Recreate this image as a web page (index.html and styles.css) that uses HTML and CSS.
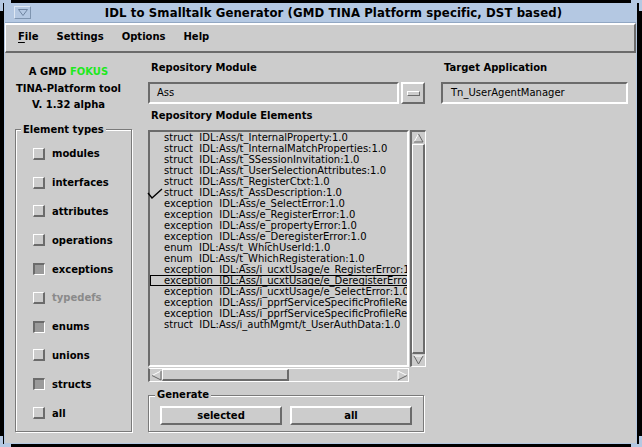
FILE: index.html
```html
<!doctype html>
<html lang="en">
<head>
  <meta charset="utf-8" />
  <title>IDL to Smalltalk Generator</title>
  <link rel="stylesheet" href="styles.css">
</head>
<body>
  <div class="screen">
    <span class="corner tl"></span>
    <span class="corner tr"></span>
    <span class="corner bl"></span>
    <span class="corner br"></span>

    <div class="window">
      <div class="titlebar">
        <span class="tb-btn">
          <svg width="10" height="7" viewBox="0 0 10 7"><path d="M0.5 0.5 H9.5 L5 6.5 Z" fill="none" stroke="#6f84a0" stroke-width="1"/></svg>
        </span>
        <span class="title">IDL to Smalltalk Generator (GMD TINA Platform specific, DST based)</span>
      </div>

      <div class="menubar">
        <span class="menu"><u>F</u>ile</span>
        <span class="menu">Settings</span>
        <span class="menu">Options</span>
        <span class="menu">Help</span>
      </div>

      <div class="content">
        <div class="side">
          <div class="about">
            <div>A GMD <span class="fokus">FOKUS</span></div>
            <div>TINA-Platform tool</div>
            <div>V. 1.32 alpha</div>
          </div>

          <fieldset class="group types">
            <legend>Element types</legend>
            <div class="type-list">
              <div class="type"><span class="cb"></span>modules</div>
              <div class="type"><span class="cb"></span>interfaces</div>
              <div class="type"><span class="cb"></span>attributes</div>
              <div class="type"><span class="cb"></span>operations</div>
              <div class="type"><span class="cb on"></span>exceptions</div>
              <div class="type off"><span class="cb"></span>typedefs</div>
              <div class="type"><span class="cb on"></span>enums</div>
              <div class="type"><span class="cb"></span>unions</div>
              <div class="type"><span class="cb on"></span>structs</div>
              <div class="type"><span class="cb"></span>all</div>
            </div>
          </fieldset>
        </div>

        <div class="main">
          <div class="top-row">
            <div class="col-module">
              <div class="label">Repository Module</div>
              <div class="field-row">
                <div class="field module">Ass</div>
                <span class="opt-btn"><span class="bar"></span></span>
              </div>
            </div>
            <div class="col-target">
              <div class="label">Target Application</div>
              <div class="field-row">
                <div class="field target">Tn_UserAgentManager</div>
              </div>
            </div>
          </div>

          <div class="label elements">Repository Module Elements</div>

          <div class="list-area">
            <div class="list">
              <svg class="check" width="16" height="11" viewBox="0 0 16 11"><path d="M1 5 L5 10 L15 1" fill="none" stroke="#000" stroke-width="1.4"/></svg>
              <div class="item">struct  IDL:Ass/t_InternalProperty:1.0</div>
              <div class="item">struct  IDL:Ass/t_InternalMatchProperties:1.0</div>
              <div class="item">struct  IDL:Ass/t_SSessionInvitation:1.0</div>
              <div class="item">struct  IDL:Ass/t_UserSelectionAttributes:1.0</div>
              <div class="item">struct  IDL:Ass/t_RegisterCtxt:1.0</div>
              <div class="item">struct  IDL:Ass/t_AssDescription:1.0</div>
              <div class="item">exception  IDL:Ass/e_SelectError:1.0</div>
              <div class="item">exception  IDL:Ass/e_RegisterError:1.0</div>
              <div class="item">exception  IDL:Ass/e_propertyError:1.0</div>
              <div class="item">exception  IDL:Ass/e_DeregisterError:1.0</div>
              <div class="item">enum  IDL:Ass/t_WhichUserId:1.0</div>
              <div class="item">enum  IDL:Ass/t_WhichRegisteration:1.0</div>
              <div class="item">exception  IDL:Ass/i_ucxtUsage/e_RegisterError:1.0</div>
              <div class="item focus">exception  IDL:Ass/i_ucxtUsage/e_DeregisterError:1.0</div>
              <div class="item">exception  IDL:Ass/i_ucxtUsage/e_SelectError:1.0</div>
              <div class="item">exception  IDL:Ass/i_pprfServiceSpecificProfileReg/e_SelectError:1.0</div>
              <div class="item">exception  IDL:Ass/i_pprfServiceSpecificProfileReg/e_RegisterError:1.0</div>
              <div class="item">struct  IDL:Ass/i_authMgmt/t_UserAuthData:1.0</div>
            </div>

            <div class="vscroll">
              <span class="arrow up">
                <svg width="11" height="10" viewBox="0 0 11 10"><path d="M1 9 L5.5 1" stroke="#fff" fill="none"/><path d="M5.5 1 L10 9 H1" stroke="#666" fill="none"/></svg>
              </span>
              <span class="thumb v"></span>
              <span class="arrow down">
                <svg width="11" height="10" viewBox="0 0 11 10"><path d="M1 1 H10" stroke="#fff" fill="none"/><path d="M1 1 L5.5 9 L10 1" stroke="#666" fill="none"/></svg>
              </span>
            </div>

            <div class="hscroll">
              <span class="arrow left">
                <svg width="11" height="11" viewBox="0 0 11 11"><path d="M10 1 L1 5.5" stroke="#fff" fill="none"/><path d="M1 5.5 L10 10 V1" stroke="#666" fill="none"/></svg>
              </span>
              <span class="thumb h"></span>
              <span class="track"></span>
              <span class="arrow right">
                <svg width="11" height="11" viewBox="0 0 11 11"><path d="M1 10 V1 L10 5.5" stroke="#fff" fill="none"/><path d="M10 5.5 L1 10" stroke="#666" fill="none"/></svg>
              </span>
            </div>
          </div>

          <fieldset class="group generate">
            <legend>Generate</legend>
            <div class="buttons">
              <button class="btn">selected</button>
              <button class="btn">all</button>
            </div>
          </fieldset>
        </div>
      </div>
    </div>
  </div>
</body>
</html>
```

FILE: styles.css
```css
:root{
  --bg:#cccccc;
  --dark:#6b6b6b;
  --light:#ffffff;
  --frame:#b4c8e2;
}
*{box-sizing:border-box}
html,body{height:100%}
body{
  margin:0;
  background:#000;
  overflow:hidden;
  font-family:"DejaVu Sans",Verdana,sans-serif;
  font-size:10px;
  color:#000;
}

.screen{
  position:relative;
  width:642px;
  height:447px;
  padding:3px 0 0 4px;
}

/* resize handles of the window frame */
.corner{position:absolute;width:11px;height:11px;border:0 solid var(--frame)}
.corner.tl{left:0;top:0;border-top-width:3px;border-left-width:3px}
.corner.tr{right:0;top:0;border-top-width:3px;border-right-width:3px}
.corner.bl{left:0;bottom:0;border-bottom-width:3px;border-left-width:3px}
.corner.br{right:0;bottom:0;border-bottom-width:3px;border-right-width:3px}

.window{
  width:633px;
  height:441px;
  border:1px solid var(--frame);
  border-top:0;
  background:var(--bg);
  display:flex;
  flex-direction:column;
}

.titlebar{
  height:20px;
  background:var(--frame);
  border-bottom:1px solid #91a7c3;
  display:flex;
  align-items:center;
  padding-left:9px;
}
.tb-btn{
  width:17px;
  height:13px;
  border:1px solid;
  border-color:#dfe8f3 #7f95b0 #7f95b0 #dfe8f3;
  display:flex;
  align-items:center;
  justify-content:center;
}
.title{
  flex:1;
  text-align:center;
  font-family:"DejaVu Sans Condensed","DejaVu Sans",sans-serif;
  font-stretch:condensed;
  font-weight:700;
  font-size:13px;
  letter-spacing:0.1px;
}

.menubar{
  height:30px;
  border:2px solid;
  border-left-width:1px;
  border-color:var(--light) var(--dark) var(--dark) var(--light);
  display:flex;
  align-items:center;
  padding:0 0 3px 3px;
  font-weight:700;
}
.menu{padding:0 9px}
.menu u{text-decoration-thickness:1px;text-underline-offset:2px}

.content{
  flex:1;
  display:flex;
}

.side{
  width:143px;
  display:flex;
  flex-direction:column;
  font-weight:700;
}
.about{
  width:127px;
  padding-top:11px;
  text-align:center;
  line-height:16.5px;
}
.fokus{color:#1ee81e}

.group{
  margin:0;
  border:1px solid #7a7a7a;
  box-shadow:inset 1px 1px 0 var(--light), 1px 1px 0 var(--light);
  min-width:0;
}
.group legend{
  padding:0 2px;
  line-height:14px;
  font-weight:700;
  background:var(--bg);
}

.types{
  flex:1;
  width:117px;
  margin:9px 0 11px 10px;
  padding:0 5px;
}
.type-list{padding:3px 0 0 12px}
.type{
  height:28.8px;
  display:flex;
  align-items:center;
  gap:7px;
}
.type.off{color:#8a8a8a}

.cb{
  width:12px;
  height:12px;
  border:solid;
  border-width:1px 2px 2px 1px;
  border-color:var(--light) var(--dark) var(--dark) var(--light);
}
.cb.on{
  background:#9a9a9a;
  border-width:2px 1px 1px 2px;
  border-color:var(--dark) var(--light) var(--light) var(--dark);
}

.main{
  flex:1;
  padding-top:8px;
  display:flex;
  flex-direction:column;
}
.label{
  font-weight:700;
  line-height:14px;
  padding-left:3px;
}
.top-row{display:flex}
.col-module{width:278px}
.col-target{width:187px;margin-left:15px}
.field-row{display:flex;margin-top:7px}
.field{
  height:22px;
  border:2px solid;
  border-color:var(--dark) var(--light) var(--light) var(--dark);
  line-height:18px;
  white-space:nowrap;
}
.field.module{width:251px;padding-left:7px}
.field.target{width:187px;padding-left:8px}
.opt-btn{
  width:24px;
  height:22px;
  margin-left:2px;
  border:2px solid;
  border-color:var(--light) var(--dark) var(--dark) var(--light);
  display:flex;
  align-items:center;
  justify-content:center;
}
.opt-btn .bar{
  width:13px;
  height:5px;
  border:1px solid;
  border-color:var(--light) var(--dark) var(--dark) var(--light);
}

.elements{margin-top:5px}

.list-area{
  margin-top:7px;
  width:278px;
  display:grid;
  grid-template-columns:261px 17px;
  grid-template-rows:237px 15px;
}
.list{
  position:relative;
  border:2px solid;
  border-color:var(--dark) var(--light) var(--light) var(--dark);
}
.item{
  height:11px;
  line-height:11px;
  padding-left:14px;
  white-space:pre;
  overflow-x:clip;
  overflow-y:visible;
}
.item.focus{
  box-shadow:inset 1px 0 0 #000, inset 0 1px 0 #000, inset 0 -1px 0 #000;
}
.check{position:absolute;left:-3px;top:56px}

.vscroll{
  margin-left:1px;
  display:flex;
  flex-direction:column;
  border:solid;
  border-width:2px 1px 1px 2px;
  border-color:var(--dark) var(--light) var(--light) var(--dark);
}
.hscroll{
  margin-top:1px;
  display:flex;
  border:solid;
  border-width:1px 1px 1px 2px;
  border-color:var(--light) var(--light) var(--light) var(--dark);
}
.arrow{display:flex;align-items:center;justify-content:center;flex:none}
.vscroll .arrow{height:12px}
.hscroll .arrow{width:12px}
.thumb{
  border:solid;
  border-width:1px 2px 2px 1px;
  border-color:var(--light) var(--dark) var(--dark) var(--light);
}
.thumb.v{flex:1}
.thumb.h{width:127px}
.track{flex:1}

.generate{
  width:276px;
  margin-top:6px;
  padding:0 6px 6px 6px;
}
.buttons{display:flex;gap:8px;margin-top:4px;margin-left:5px}
.btn{
  appearance:none;
  width:122px;
  height:19px;
  padding:0;
  background:var(--bg);
  border:2px solid;
  border-color:var(--light) var(--dark) var(--dark) var(--light);
  font-family:inherit;
  font-size:10px;
  font-weight:700;
  color:#000;
}
```
